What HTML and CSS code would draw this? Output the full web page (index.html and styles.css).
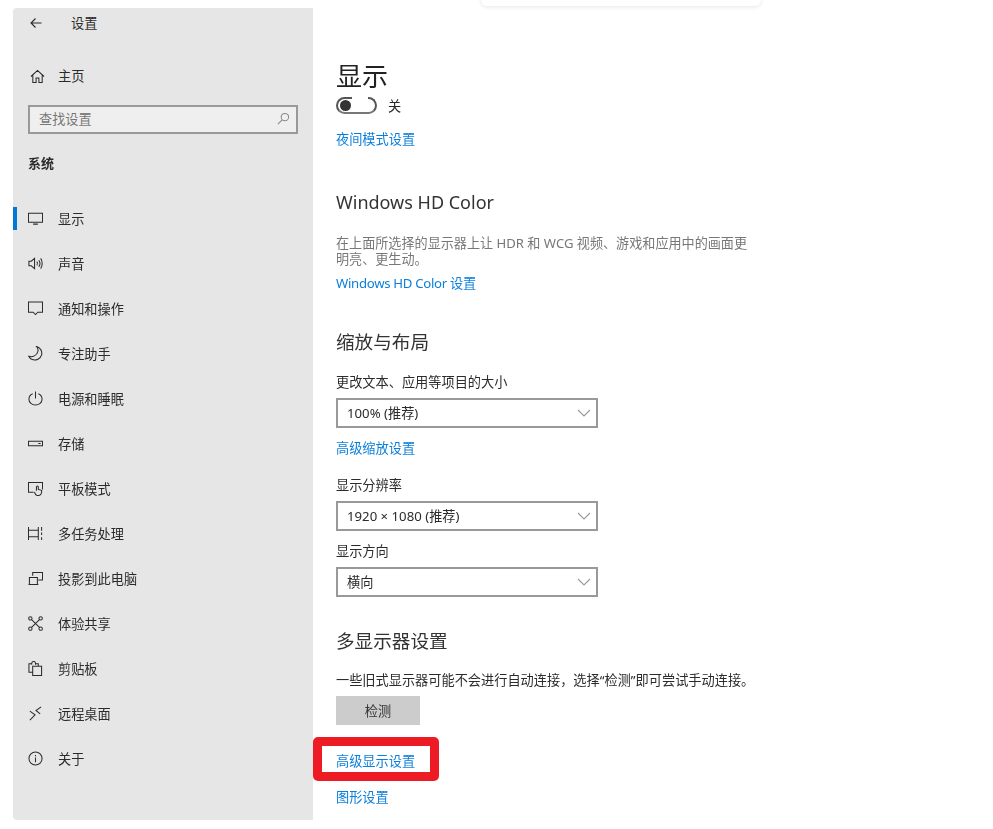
FILE: index.html
```html
<!DOCTYPE html>
<html lang="zh">
<head>
  <meta charset="UTF-8">
  <title>设置</title>
  <link rel="stylesheet" href="styles.css">
</head>
<body>
  <div class="top-sliver"></div>
  <aside class="sidebar">
    <div class="app-head">
      <svg class="back" viewBox="0 0 12 12"><path d="M11.500 6H1M5.500 1.500 1 6l4.500 4.500"/></svg>
      <span>设置</span>
    </div>
    <div class="home">
      <svg class="icon" viewBox="0 0 16 16"><path d="M1 8 8 1.500 15 8M3 6.500V14.500H6.500V9.500H9.500V14.500H13V6.500"/></svg>
      <span>主页</span>
    </div>
    <div class="search">
      <span>查找设置</span>
      <svg viewBox="0 0 14 14"><circle cx="8.500" cy="5.500" r="4"/><path d="M5.500 8.500 1 13"/></svg>
    </div>
    <h4 class="group">系统</h4>
    <nav class="nav">
      <div class="nav-row active">
        <svg class="icon" viewBox="0 0 16 16"><path d="M.5 2.500H15.500V12H.5ZM5.500 14H10.500"/></svg>
        <span>显示</span>
      </div>
      <div class="nav-row">
        <svg class="icon" viewBox="0 0 16 16"><path d="M1 5.500H3.500L7 2.500V13.500L3.500 10.500H1ZM9.500 6C10.300 7.200 10.300 8.800 9.500 10M11.500 4.500C13 6.500 13 9.500 11.500 11.500M13.500 2.500C15.700 5.500 15.700 10.500 13.500 13.500"/></svg>
        <span>声音</span>
      </div>
      <div class="nav-row">
        <svg class="icon" viewBox="0 0 16 16"><path d="M.5 1H15.500V12H10.500L8 14.500 5.500 12H.5Z"/></svg>
        <span>通知和操作</span>
      </div>
      <div class="nav-row">
        <svg class="icon" viewBox="0 0 16 16"><path d="M9 .5C13 1.500 15.500 5.500 14.500 9.500 13.500 13.500 8.500 16 4.500 14.500 3 14 1.500 12.500 .8 11 5 12.500 9.500 10 10.500 6 11 4 10.500 2 9 .5Z"/></svg>
        <span>专注助手</span>
      </div>
      <div class="nav-row">
        <svg class="icon" viewBox="0 0 16 16"><path d="M5 3C2.500 4 1 6.300 1 8.700 1 12.400 4.200 15 8 15S15 12.400 15 8.700C15 6.300 13.500 4 11 3M8 .5V8"/></svg>
        <span>电源和睡眠</span>
      </div>
      <div class="nav-row">
        <svg class="icon" viewBox="0 0 16 16"><path d="M.5 5.500H15.500V10.500H.5ZM11 8H13.500"/></svg>
        <span>存储</span>
      </div>
      <div class="nav-row">
        <svg class="icon" viewBox="0 0 16 16"><path d="M6 12H.5V1.500H15.500V9M9 10.500V6.500C9 5 11 5 11 6.500V9L14.500 10C15 13 13.500 15.500 11 15.500 9 15.500 7.500 14 7 11.500"/></svg>
        <span>平板模式</span>
      </div>
      <div class="nav-row">
        <svg class="icon" viewBox="0 0 16 16"><path d="M.5 1V15M11 1V15M.5 4.500H11M.5 11.500H11M14.500 1V5M14.500 7V9.500M14.500 12V15"/></svg>
        <span>多任务处理</span>
      </div>
      <div class="nav-row">
        <svg class="icon" viewBox="0 0 16 16"><path d="M5 5V1.500H15.500V9.500H11M1.500 14V7H10V14M.5 14.500H11"/></svg>
        <span>投影到此电脑</span>
      </div>
      <div class="nav-row">
        <svg class="icon" viewBox="0 0 16 16"><circle cx="2.500" cy="2.500" r="1.800"/><circle cx="13.500" cy="2.500" r="1.800"/><circle cx="2.500" cy="13.500" r="1.800"/><circle cx="13.500" cy="13.500" r="1.800"/><path d="M3.800 3.800 12.200 12.200M12.200 3.800 3.800 12.200"/></svg>
        <span>体验共享</span>
      </div>
      <div class="nav-row">
        <svg class="icon" viewBox="0 0 16 16"><path d="M4.500 12H1V3H4M4 4V2.500C4 1.500 5 .5 6 .5S8 1.500 8 2.500V4M8 3H11V5.500M5 5.500H14.500V15.500H5Z"/></svg>
        <span>剪贴板</span>
      </div>
      <div class="nav-row">
        <svg class="icon" viewBox="0 0 16 16"><path d="M2 5.500 7.500 9.500 2 15M14 1 8.500 4.800 13 8.500"/></svg>
        <span>远程桌面</span>
      </div>
      <div class="nav-row">
        <svg class="icon" viewBox="0 0 16 16"><circle cx="8" cy="8" r="7"/><path d="M8 7V12M8 4.200V5.500"/></svg>
        <span>关于</span>
      </div>
    </nav>
  </aside>

  <main class="content">
    <h1 class="page-title">显示</h1>
    <div class="toggle-row">
      <div class="toggle"><i></i></div>
      <span>关</span>
    </div>
    <a class="link night-link">夜间模式设置</a>

    <h2 class="section hd-title">Windows HD Color</h2>
    <p class="desc">在上面所选择的显示器上让 HDR 和 WCG 视频、游戏和应用中的画面更明亮、更生动。</p>
    <a class="link hd-link">Windows HD Color 设置</a>

    <h2 class="section scale-title">缩放与布局</h2>
    <div class="label">更改文本、应用等项目的大小</div>
    <div class="select">
      <span>100% (推荐)</span>
      <svg viewBox="0 0 14 8"><path d="M1 1 7 7 13 1"/></svg>
    </div>
    <a class="link after-select">高级缩放设置</a>
    <div class="label res-label">显示分辨率</div>
    <div class="select">
      <span>1920 × 1080 (推荐)</span>
      <svg viewBox="0 0 14 8"><path d="M1 1 7 7 13 1"/></svg>
    </div>
    <div class="label dir-label">显示方向</div>
    <div class="select">
      <span>横向</span>
      <svg viewBox="0 0 14 8"><path d="M1 1 7 7 13 1"/></svg>
    </div>

    <h2 class="section multi-title">多显示器设置</h2>
    <p class="multi-text">一些旧式显示器可能不会进行自动连接，选择“检测”即可尝试手动连接。</p>
    <button class="detect">检测</button>
    <a class="link advanced">高级显示设置</a>
    <a class="link gfx-link">图形设置</a>
  </main>
</body>
</html>
```

FILE: styles.css
```css
* {
  box-sizing: border-box;
}
body {
  margin: 0;
  height: 829px;
  overflow: hidden;
  position: relative;
  display: flex;
  background-color: #fff;
  color: #2b2b2b;
  font-family: "Noto Sans", "Noto Sans CJK SC", sans-serif;
  font-size: 13.2px;
  line-height: 20px;
  filter: blur(0.4px);
}
.top-sliver {
  position: absolute;
  left: 481px;
  top: -10px;
  width: 280px;
  height: 16px;
  background-color: #fff;
  border-radius: 6px;
  box-shadow: 0 1px 4px rgba(0, 0, 0, 0.1);
}
svg {
  fill: none;
  stroke: currentColor;
  stroke-width: 1.1;
}

/* sidebar */
.sidebar {
  width: 300px;
  height: 812px;
  margin: 8px 0 0 13px;
  padding-top: 5px;
  background-color: #e6e6e6;
  border-radius: 4px 0 0 4px;
}
.app-head {
  display: flex;
  align-items: center;
  height: 20px;
  padding-left: 17px;
}
.back {
  width: 12px;
  height: 12px;
  margin-right: 29px;
}
.home {
  display: flex;
  align-items: center;
  height: 20px;
  margin-top: 33px;
  padding-left: 17px;
}
.home .icon {
  margin-right: 13px;
}
.icon {
  width: 15px;
  height: 15px;
  flex: none;
}
.search {
  display: flex;
  align-items: center;
  justify-content: space-between;
  width: 270px;
  height: 29px;
  margin: 19px 0 0 15px;
  padding: 0 6px 2px 9px;
  background-color: #efefef;
  border: 2px solid #999;
  color: #777;
}
.search svg {
  width: 13px;
  height: 13px;
  color: #888;
}
.group {
  margin: 19px 0 0 15px;
  font-size: 13px;
  font-weight: 700;
  line-height: 20px;
}
.nav {
  margin-top: 23px;
}
.nav-row {
  display: flex;
  align-items: center;
  gap: 15px;
  height: 45px;
  padding-left: 15px;
  position: relative;
}
.nav-row.active::before {
  content: "";
  position: absolute;
  left: 0;
  top: 11px;
  width: 4px;
  height: 23px;
  background-color: #0078d7;
}

/* main column */
.content {
  flex: 1;
  padding: 61px 0 0 23px;
}
.page-title {
  margin: 0;
  font-size: 26px;
  font-weight: 400;
  line-height: 30px;
  color: #222;
}
.toggle-row {
  display: flex;
  align-items: center;
  gap: 11px;
  height: 20px;
  margin-top: 5px;
}
.toggle {
  position: relative;
  width: 41px;
  height: 17px;
  margin-top: -2px;
  padding: 1px 2px;
  border: 2px solid #555;
  border-bottom-color: #777;
  border-radius: 9px;
}
/* the top edge of the switch fades out in the reference */
.toggle::after {
  content: "";
  position: absolute;
  left: 14px;
  top: -2px;
  width: 16px;
  height: 2px;
  background-color: #fff;
}
.toggle i {
  display: block;
  width: 11px;
  height: 11px;
  border-radius: 50%;
  background-color: #333;
}
.link {
  display: block;
  width: fit-content;
  color: #0b7fdb;
}
.night-link {
  margin-top: 13px;
}
.section {
  margin: 0;
  font-size: 18px;
  font-weight: 400;
  line-height: 26px;
  color: #333;
}
.hd-title {
  margin-top: 40px;
}
.desc {
  width: 416px;
  margin: 20px 0 0;
  font-size: 13.1px;
  line-height: 16px;
  color: #777;
}
.hd-link {
  margin-top: 6px;
  letter-spacing: -0.3px;
}
.scale-title {
  margin-top: 36px;
}
.scale-title, .multi-title {
  font-size: 18.6px;
}
.label {
  margin-top: 17px;
}
.select {
  display: flex;
  align-items: center;
  justify-content: space-between;
  width: 262px;
  height: 30px;
  margin-top: 6px;
  padding: 0 5px 0 9px;
  border: 2px solid #999;
}
.select svg {
  width: 14px;
  height: 8px;
  color: #999;
}
.after-select {
  margin-top: 10px;
}
.res-label {
  margin-top: 17px;
}
.dir-label {
  margin-top: 10px;
}
.multi-title {
  margin-top: 31px;
}
.multi-text {
  margin: 16px 0 0;
}
.detect {
  display: block;
  width: 84px;
  height: 29px;
  margin-top: 6px;
  border: none;
  background-color: #ccc;
  color: #333;
  font: inherit;
}
.advanced {
  margin-top: 26px;
  position: relative;
}
/* the red mark drawn over the screenshot */
.advanced::after {
  content: "";
  position: absolute;
  box-sizing: border-box;
  left: -23px;
  top: -14px;
  width: 126px;
  height: 44px;
  border: 9px solid #ed1c24;
  border-radius: 5px;
}
.gfx-link {
  margin-top: 16px;
}
```
